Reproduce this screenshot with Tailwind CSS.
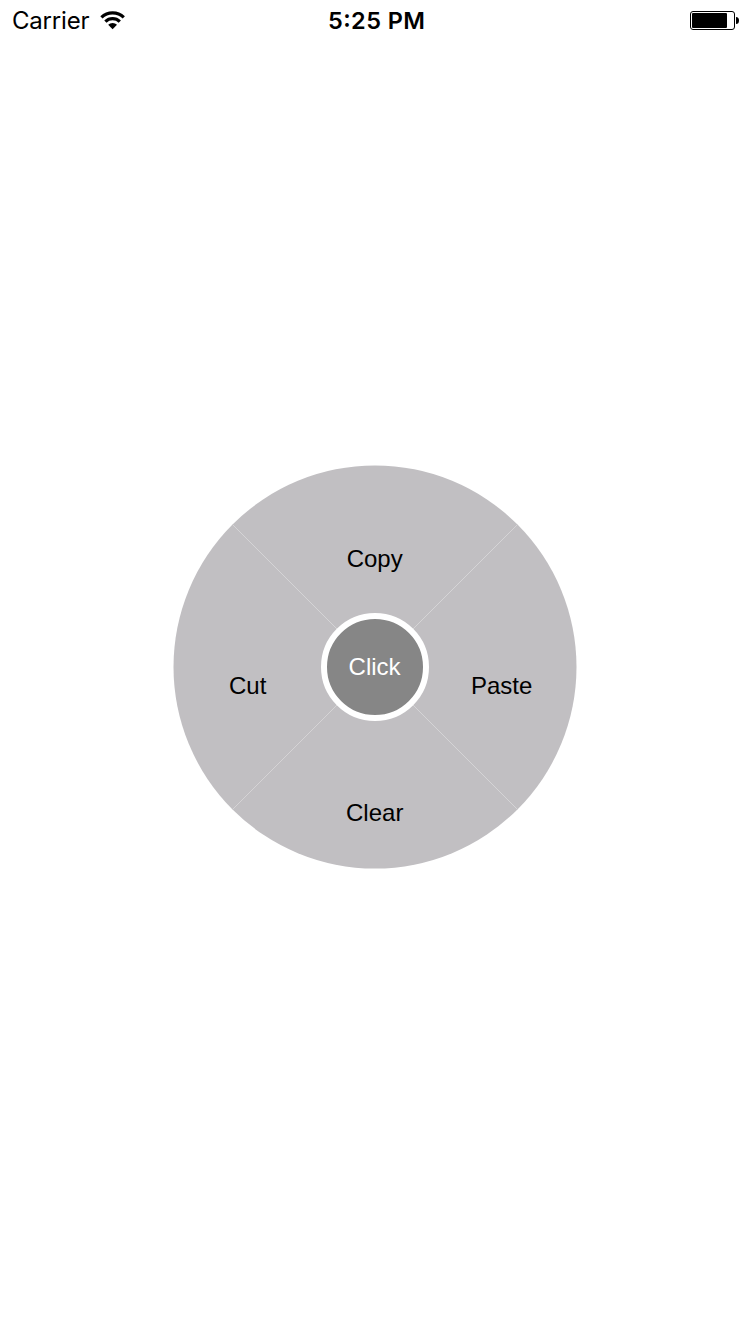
<!DOCTYPE html>
<html lang="en">
<head>
<meta charset="utf-8">
<title>Radial menu</title>
<script src="https://cdn.jsdelivr.net/npm/@tailwindcss/browser@4"></script>
</head>
<body class="bg-white text-black">
<div class="flex h-[1334px] w-[750px] flex-col overflow-hidden bg-white">
  <header class="grid h-10 shrink-0 grid-cols-3 items-center font-['Inter','Liberation_Sans',sans-serif] text-2xl leading-10">
    <div class="flex items-center pl-3">
      <svg class="h-10 w-32" viewBox="12 0 128 40" aria-label="Carrier, Wi-Fi">
        <text x="12" y="29" font-size="24" textLength="77.5" lengthAdjust="spacing">Carrier</text>
        <g fill="none" stroke="#000" stroke-width="3.2">
          <path d="M101.4 17.4A16.2 16.2 0 0 1 123.8 17.4"/>
          <path d="M105.4 21.6A10.3 10.3 0 0 1 119.8 21.6"/>
        </g>
        <path d="M112.6 29.2L108.2 24.8A6.2 6.2 0 0 1 117 24.8Z"/>
      </svg>
    </div>
    <div class="flex justify-center">
      <svg class="h-10 w-32" viewBox="311 0 128 40">
        <text x="328" y="29" font-size="23.5" font-weight="600" textLength="97" lengthAdjust="spacing">5:25 PM</text>
      </svg>
    </div>
    <div class="flex justify-end pr-2.5">
      <svg class="h-10 w-[52px]" viewBox="688 0 52 40" aria-label="Battery">
        <rect x="690.5" y="11.5" width="44" height="18" rx="2.5" fill="none" stroke="#000"/>
        <rect x="692" y="13" width="35" height="15" rx="1"/>
        <path d="M736 17a3 3.5 0 0 1 0 7Z"/>
      </svg>
    </div>
  </header>
  <main class="flex flex-1 items-center justify-center pb-10">
    <svg class="size-[404px]" viewBox="173 465 404 404" font-family="'Liberation Sans', Arial, sans-serif" font-size="24" text-anchor="middle">
      <circle cx="375" cy="667" r="201.5" fill="#c1bfc2"/>
      <path d="M232.4 524.4L517.6 809.6M517.6 524.4L232.4 809.6" stroke="#dad9db" stroke-width=".8"/>
      <circle cx="375" cy="667" r="51" fill="#868686" stroke="#fff" stroke-width="6"/>
      <text x="374.7" y="567">Copy</text>
      <text x="247.7" y="694">Cut</text>
      <text x="501.7" y="694">Paste</text>
      <text x="374.7" y="821">Clear</text>
      <text x="374.6" y="675" fill="#fff">Click</text>
    </svg>
  </main>
</div>
</body>
</html>
